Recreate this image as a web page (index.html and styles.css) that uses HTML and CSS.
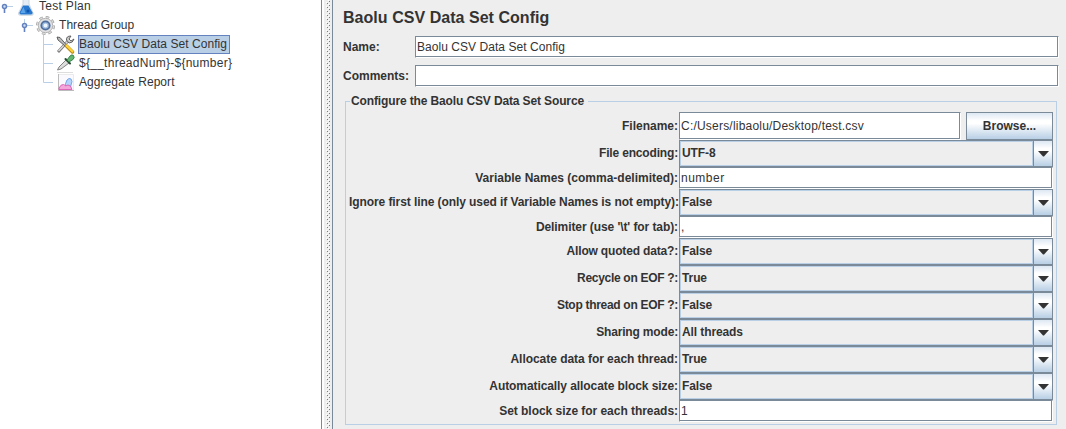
FILE: index.html
```html
<!DOCTYPE html>
<html lang="en">
<head>
<meta charset="utf-8">
<title>Baolu CSV Data Set Config</title>
<link rel="stylesheet" href="styles.css">
</head>
<body>
<div class="app">
  <nav class="tree">
    <div class="node">
      <svg width="36" height="19" viewBox="0 0 36 19">
        <path d="M7 9.500H13" stroke="#b8cfe5"/><path d="M4.500 11V16" stroke="#6382bf" stroke-width="1.600"/><circle cx="4.500" cy="9.500" r="2" fill="#cfdef0" stroke="#6382bf" stroke-width="1.500"/>
        <path d="M23 0V7L18.500 16Q18 18.300 20.500 18.300H31.500Q34 18.300 33 16L29 7V0Z" fill="#e4edf5" stroke="#c3ced8" stroke-width=".8"/>
        <path d="M23 8.500H28.500L32.500 15.500Q33 17.500 31 17.500H21Q19 17.500 19.500 15.500Z" fill="#2878cf"/><path d="M23.500 10L20.500 16H25.500Z" fill="#5da5e8"/><circle cx="28" cy="14" r="1.500" fill="#0d55b0"/>
      </svg>
      <span class="node-label t-plan">Test Plan</span>
    </div>
    <div class="node">
      <svg width="56" height="19" viewBox="0 0 56 19">
        <path d="M24.500 3V7M27 9.500H33" stroke="#b8cfe5"/><path d="M24.500 11V16" stroke="#6382bf" stroke-width="1.600"/><circle cx="24.500" cy="9.500" r="2" fill="#cfdef0" stroke="#6382bf" stroke-width="1.500"/>
        <g fill="none" stroke-dasharray="3.600 3.077"><circle cx="45.500" cy="9.500" r="8.500" stroke="#a2a2a2" stroke-width="2"/><circle cx="45.500" cy="9.500" r="8" stroke="#dcdcdc" stroke-width="1.600" stroke-dasharray="2.500 3.783" stroke-dashoffset="-.5"/></g>
        <circle cx="45.500" cy="9.500" r="7.200" fill="#e2e2e2" stroke="#a6a6a6" stroke-width=".8"/>
        <circle cx="45.500" cy="9.500" r="4.200" fill="#9dbbe0" stroke="#506f9d" stroke-width="1.800"/><circle cx="45.500" cy="9.500" r="2" fill="#edf6ff"/>
      </svg>
      <span class="node-label">Thread Group</span>
    </div>
    <div class="node">
      <svg width="76" height="19" viewBox="0 0 76 19">
        <path d="M43.500 0V19M44 9.500H53" stroke="#b8cfe5"/>
        <path d="M58 17L68 6" stroke="#777" stroke-width="2.800"/><path d="M58.500 16L68 6" stroke="#ddd" stroke-width="1.300"/>
        <path d="M71 1Q66 1 66.500 5L69 8Q73 8 74 4L71 6L69 4Z" fill="#ccc" stroke="#555" stroke-width=".9"/>
        <path d="M57 2L60 2.500L66.500 10L65 11L58 5Z" fill="#bbb" stroke="#444" stroke-width=".8"/>
        <path d="M66.500 11L72.500 17" stroke="#b98a10" stroke-width="3.400" stroke-linecap="round"/><path d="M66.500 10.500L72.500 16.500" stroke="#ffd33b" stroke-width="2" stroke-linecap="round"/>
      </svg>
      <span class="node-label selected">Baolu CSV Data Set Config</span>
    </div>
    <div class="node">
      <svg width="76" height="19" viewBox="0 0 76 19">
        <path d="M43.500 0V19M44 9.500H53" stroke="#b8cfe5"/><path d="M57 18.500H73" stroke="#ddd"/>
        <path d="M57.500 16L59 13L66 6L69 9L61 15Z" fill="#ddd" stroke="#777" stroke-width=".9"/>
        <path d="M65.500 5L70 9.500" stroke="#264c30" stroke-width="2" stroke-linecap="round"/>
        <path d="M67 6L70 2Q72 0 73.500 1.500Q75 3.500 73 5.500L69 8Z" fill="#62b672" stroke="#317e44" stroke-width=".9"/>
      </svg>
      <span class="node-label t-sampler">${__threadNum}-${number}</span>
    </div>
    <div class="node">
      <svg width="76" height="19" viewBox="0 0 76 19">
        <path d="M43.500 0V9.500H53" fill="none" stroke="#b8cfe5"/>
        <path d="M58.500 1.500H73.500V17.500H58.500Z" fill="#fafafe" stroke="#eaeaea"/><path d="M58.500 1V17.500H74" fill="none" stroke="#bbb"/>
        <path d="M65 16Q65 10 67 7Q69 4.500 71 6Q73 8 71 12L70 16Z" fill="#b4d4fb" stroke="#75a5ec"/>
        <path d="M59 15Q61 11 63.500 11.500Q66 14 68 12Q71 12 72 16.500H59Z" fill="#f3a6d9" stroke="#dc5cb4" stroke-width=".9"/>
      </svg>
      <span class="node-label">Aggregate Report</span>
    </div>
  </nav>
  <div class="divider"><svg width="4" height="429"><defs><pattern id="bumps" width="4" height="4" patternUnits="userSpaceOnUse"><path d="M0 2h1v1H0zM2 0h1v1H2z" fill="#fff"/><path d="M1 3h1v1H1zM3 1h1v1H3z" fill="#777f88"/></pattern></defs><rect width="4" height="429" fill="url(#bumps)"/></svg></div>
  <main class="editor">
    <h1 class="title">Baolu CSV Data Set Config</h1>
    <div class="property"><label>Name:</label><div class="field">Baolu CSV Data Set Config</div></div>
    <div class="property"><label>Comments:</label><div class="field"></div></div>
    <section class="group">
      <h2 class="legend">Configure the Baolu CSV Data Set Source</h2>
      <div class="row file"><label>Filename:</label><div class="field path">C:/Users/libaolu/Desktop/test.csv</div><button class="browse">Browse...</button></div>
      <div class="row"><label class="snug">File encoding:</label><div class="combo"><span>UTF-8</span><i class="arrow"><svg width="11" height="6"><path d="M0 0H11L6 5.500H5Z"/></svg></i></div></div>
      <div class="row text"><label>Variable Names (comma-delimited):</label><div class="field wide">number</div></div>
      <div class="row"><label class="close">Ignore first line (only used if Variable Names is not empty):</label><div class="combo"><span>False</span><i class="arrow"><svg width="11" height="6"><path d="M0 0H11L6 5.500H5Z"/></svg></i></div></div>
      <div class="row text"><label class="close">Delimiter (use '\t' for tab):</label><div class="field">,</div></div>
      <div class="row"><label class="snug">Allow quoted data?:</label><div class="combo"><span>False</span><i class="arrow"><svg width="11" height="6"><path d="M0 0H11L6 5.500H5Z"/></svg></i></div></div>
      <div class="row"><label class="tight">Recycle on EOF ?:</label><div class="combo"><span>True</span><i class="arrow"><svg width="11" height="6"><path d="M0 0H11L6 5.500H5Z"/></svg></i></div></div>
      <div class="row"><label class="tight">Stop thread on EOF ?:</label><div class="combo"><span>False</span><i class="arrow"><svg width="11" height="6"><path d="M0 0H11L6 5.500H5Z"/></svg></i></div></div>
      <div class="row"><label class="snug">Sharing mode:</label><div class="combo"><span>All threads</span><i class="arrow"><svg width="11" height="6"><path d="M0 0H11L6 5.500H5Z"/></svg></i></div></div>
      <div class="row"><label class="near">Allocate data for each thread:</label><div class="combo"><span>True</span><i class="arrow"><svg width="11" height="6"><path d="M0 0H11L6 5.500H5Z"/></svg></i></div></div>
      <div class="row"><label class="close">Automatically allocate block size:</label><div class="combo"><span>False</span><i class="arrow"><svg width="11" height="6"><path d="M0 0H11L6 5.500H5Z"/></svg></i></div></div>
      <div class="row text"><label class="near">Set block size for each threads:</label><div class="field">1</div></div>
    </section>
  </main>
</div>
</body>
</html>
```
FILE: styles.css
```css
* { box-sizing: border-box; }
body { margin: 0; font: 12px/14px "Liberation Sans", Arial, sans-serif; color: #333; background: #eee; overflow: hidden; }
svg { display: block; flex: none; }
.app { display: flex; width: 1066px; height: 429px; }
.tree { width: 322px; flex: none; background: #fff; border-right: 1px solid #7a8a99; margin-top: -3px; height: 432px; }
.node { display: flex; height: 19px; white-space: nowrap; }
.node-label { margin-left: 2px; height: 19px; padding: 1px 2px 0 0; border: 1px solid transparent; line-height: 14px; letter-spacing: .05px; }
.t-plan { letter-spacing: .3px; }
.t-sampler { letter-spacing: .27px; }
.node-label.selected { background: #b8cfe5; border-color: #6382bf; }
.divider { width: 11px; flex: none; border-left: 2px solid #fff; border-right: 1px solid #7a8a99; padding-left: 2px; }
.editor { flex: 1; padding: 8px 7px 0 10px; }
.title { margin: 0 0 9px; font-size: 16px; line-height: 19px; letter-spacing: .04px; }
.property { display: flex; height: 22px; margin-bottom: 7px; }
.property label { width: 72px; flex: none; font-weight: bold; padding-top: 4px; }
.property .field { letter-spacing: .05px; }
.field { flex: 1; min-width: 0; background: #fff; border: 1px solid #7a8a99; border-right-color: #fff; border-bottom-color: #fff; box-shadow: inset -1px -1px #7a8a99; padding: 3px 1px 0; white-space: nowrap; }
.group { margin: 14px 2px 0 2px; height: 324px; border: 1px solid #b8cfe5; padding: 0 3px; }
.legend { font-size: 12px; line-height: 14px; letter-spacing: -.13px; margin: -8px 0 4px 1px; padding: 0 4px 0 1px; width: max-content; background: #eee; }
.row { display: flex; height: 27px; }
.row label { width: 330px; flex: none; text-align: right; font-weight: bold; white-space: nowrap; padding: 6px 1px 0 0; }
.row .near { letter-spacing: -.04px; }
.row .close { letter-spacing: -.08px; }
.row .snug { letter-spacing: -.17px; }
.row .tight { letter-spacing: -.3px; }
.row.text { height: 22px; }
.row.text label { padding-top: 4px; }
.row.file { height: 28px; }
.row.file .field { flex: none; width: 282px; padding-top: 6px; }
.row.file label { padding-top: 7px; }
.field.path { letter-spacing: .21px; }
.field.wide { letter-spacing: .5px; }
.browse { margin: 0 0 0 5px; padding: 0; width: 87px; border: 1px solid #7a8a99; font: bold 12px/14px "Liberation Sans", Arial, sans-serif; color: #333; background: linear-gradient(#dde8f3, #fff 30%, #fff 40%, #b8cfe5); }
.combo { display: flex; flex: 1; border: 1px solid #7a8a99; font-weight: bold; }
.combo span { flex: 1; border: 1px solid #b8cfe5; padding: 4px 1px 0; letter-spacing: -.1px; }
.arrow { width: 19px; border-left: 1px solid #7a8a99; background: linear-gradient(#dde8f3, #fff 30%, #fff 40%, #b8cfe5); padding: 10px 0 0 4px; fill: #333; }
```
